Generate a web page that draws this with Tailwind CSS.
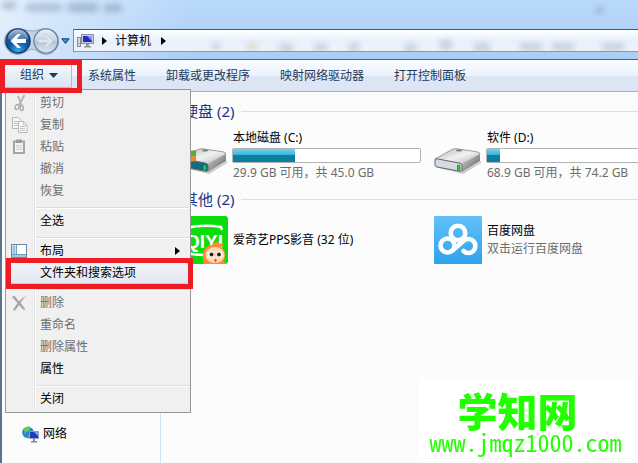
<!DOCTYPE html>
<html lang="zh-CN">
<head>
  <meta charset="UTF-8">
  <meta name="viewport" content="width=device-width, initial-scale=1">
  <title>计算机</title>
  <script src="https://cdn.jsdelivr.net/npm/@tailwindcss/browser@4"></script>
</head>
<body class="min-h-screen overflow-hidden bg-[#fcfcfc] flex flex-col font-['Noto_Sans','Noto_Sans_CJK_SC',sans-serif] text-xs text-black">

  <!-- Title bar and address bar -->
  <header class="relative h-[59px] shrink-0 overflow-hidden bg-linear-to-b from-[#b9d9fb] to-[#aacdf5] flex items-start">
    <svg class="absolute left-0 top-0 w-[638px] h-[59px]" viewBox="0 0 638 59" aria-hidden="true">
      <defs>
        <filter id="glass" x="-20%" y="-50%" width="140%" height="200%"><feGaussianBlur stdDeviation="3"/></filter>
        <linearGradient id="shine" x1="0" x2="1"><stop offset="0" stop-color="#fff" stop-opacity=".6"/><stop offset="1" stop-color="#fff" stop-opacity="0"/></linearGradient>
      </defs>
      <rect width="190" height="59" fill="url(#shine)"/>
      <g filter="url(#glass)" fill="#5f7896" opacity=".4">
        <rect x="2" y="2" width="14" height="7"/><rect x="26" y="4" width="36" height="7"/><rect x="68" y="3" width="30" height="9"/><rect x="104" y="4" width="18" height="8"/>
        <path d="M603 4v9h-10Z"/>
      </g>
    </svg>
    <nav class="relative flex items-center pl-1 pt-[27px] w-[73px] shrink-0" aria-label="导航">
      <svg class="absolute left-[3px] top-[27px]" width="57" height="29" viewBox="0 0 57 29" aria-hidden="true">
        <path d="M14.500 1.500C21 1.500 23 4 29 4S37 1.500 43 1.500C50 1.500 55.500 7 55.500 14S50 27.500 43 27.500C37 27.500 33 22 29 22S21 27.500 14.500 27.500C7 27.500 1.500 21 1.500 14S7 1.500 14.500 1.500Z" fill="#c2d2e4" stroke="#8fa5be"/>
      </svg>
      <button class="relative w-7 h-7" aria-label="后退">
        <svg width="28" height="28" viewBox="0 0 28 28">
          <defs><radialGradient id="back" cx=".5" cy=".9" r=".9"><stop offset="0" stop-color="#2fb0e8"/><stop offset=".45" stop-color="#0c5aa6"/><stop offset=".7" stop-color="#1d4c90"/><stop offset="1" stop-color="#8fb4dc"/></radialGradient></defs>
          <circle cx="14" cy="14" r="12" fill="url(#back)" stroke="#173a68" stroke-width="1.500"/>
          <path d="M4 12a10 10 0 0 1 20 0Q14 15 4 12Z" fill="#fff" opacity=".3"/>
          <path d="M13.500 7 6.500 14l7 7H17L12.500 16H22v-4h-9.500L17 7Z" fill="#fff"/>
        </svg>
      </button>
      <button class="relative w-7 h-7" aria-label="前进">
        <svg width="28" height="28" viewBox="0 0 28 28">
          <defs><linearGradient id="fwd" x2="0" y2="1"><stop offset="0" stop-color="#e9f0f8"/><stop offset=".5" stop-color="#c3d2e2"/><stop offset=".52" stop-color="#afc2d8"/><stop offset="1" stop-color="#dce9f5"/></linearGradient></defs>
          <circle cx="14" cy="14" r="12" fill="url(#fwd)" stroke="#6d7f97" stroke-width="1.200"/>
          <path d="M14.500 7.500 21 14l-6.500 6.500H11l4.500-4.700H6v-3.600h9.500L11 7.500Z" fill="#dde6ef" stroke="#b5c4d4" stroke-width=".5"/>
        </svg>
      </button>
      <button class="ml-px w-[9px]" aria-label="最近浏览的位置">
        <svg width="9" height="7" viewBox="0 0 9 7"><path d="M.8.8h7.400L4.500 5.500Z" fill="#3d97c8" stroke="#123c70"/></svg>
      </button>
    </nav>
    <div class="relative mt-[29px] h-[23px] grow flex items-center gap-2 pl-[3px] border-l border-y border-l-[#7e8c9c] border-t-[#46586c] border-b-[#8799ae] bg-linear-to-b from-white via-[#e9f1fc] to-[#eef3fa]">
      <svg class="absolute left-0 top-0 w-[565px] h-[21px]" viewBox="0 0 565 21" aria-hidden="true">
        <g filter="url(#glass)" fill="#6d7784" opacity=".28">
          <rect x="138" y="13" width="8" height="7"/><rect x="173" y="13" width="10" height="8" fill="#c08a4a"/><rect x="205" y="14" width="14" height="8"/><rect x="240" y="14" width="14" height="7"/><rect x="275" y="13" width="10" height="9"/><rect x="330" y="14" width="13" height="8"/><rect x="366" y="10" width="12" height="10"/><rect x="400" y="13" width="16" height="9"/><rect x="446" y="13" width="22" height="8"/><rect x="478" y="13" width="22" height="8"/><rect x="528" y="13" width="22" height="8"/>
        </g>
      </svg>
      <svg class="relative" width="17" height="16" viewBox="0 0 17 16" aria-hidden="true">
        <rect x=".5" y="4.500" width="3" height="9" fill="#d5d9de" stroke="#868d96"/><path d="M1.500 10.500h1" stroke="#3bd23b"/>
        <rect x="4.500" y="1.500" width="12" height="9" fill="#c9ced6" stroke="#8c939d"/><rect x="6" y="3" width="9" height="6" fill="#1c2fc4"/><path d="M10 3h5v5Z" fill="#7f9cf0"/>
        <path d="M9 11h3v2h2v1.500H7V13h2Z" fill="#9299a4"/>
      </svg>
      <svg class="relative" width="5" height="8" viewBox="0 0 5 8" aria-hidden="true"><path d="M0 0v8l5-4Z"/></svg>
      <a href="#" class="relative leading-5">计算机</a>
      <svg class="relative ml-0.5" width="5" height="8" viewBox="0 0 5 8" aria-hidden="true"><path d="M0 0v8l5-4Z"/></svg>
    </div>
  </header>

  <!-- Command bar -->
  <div class="h-[33px] shrink-0 flex items-center gap-[30px] pl-[5px] border-t border-b border-t-[#50637d] border-b-[#a3b1c5] bg-linear-to-b from-[#fafdff] from-0% via-[#eaf2fb] via-50% to-[#dce6f4] to-52% text-[#1e395b] whitespace-nowrap">
    <div class="relative h-6 w-[67px] -mr-[14px]">
      <button class="w-full h-6 pl-[15px] flex items-center gap-[5px] border-r border-b border-[#a9bdd6] bg-linear-to-b from-[#f5f9fd] to-[#d9e3f1]" aria-expanded="true">
        组织
        <svg width="9" height="5" viewBox="0 0 9 5" aria-hidden="true"><path d="M0 0h9L4.500 5Z" fill="#1e395b"/></svg>
      </button>

      <!-- Organize menu -->
      <div class="absolute z-10 left-0 top-[25px] w-[186px] py-0.5 px-px border border-[#979797] bg-[#f0f0f0] text-black" role="menu">
        <div class="absolute left-7 inset-y-0.5 w-0.5 border-l border-l-[#e2e3e3] bg-white"></div>
        <button class="relative flex items-center w-full h-[22px] text-[#6d6d6d]" role="menuitem" disabled>
          <svg class="ml-1 mr-[11px] size-[18px]" viewBox="0 0 18 18" aria-hidden="true"><path d="M7 2l3.500 9M13.500 1 8 11" stroke="#b4b4b4" stroke-width="1.800" fill="none"/><ellipse cx="6" cy="13" rx="1.800" ry="2.600" fill="none" stroke="#a9a9a9" stroke-width="1.400" transform="rotate(35 6 13)"/><ellipse cx="10.800" cy="14" rx="1.500" ry="2.600" fill="none" stroke="#a9a9a9" stroke-width="1.400"/></svg>剪切
        </button>
        <button class="relative flex items-center w-full h-[22px] text-[#6d6d6d]" role="menuitem" disabled>
          <svg class="ml-1 mr-[11px] size-[18px]" viewBox="0 0 18 18" aria-hidden="true"><g fill="#f7f7f7" stroke="#b9b9b9"><path d="M1.500 1.500h6l3 3v8h-9Z"/><path d="M7.500 5.500h5l3.500 3.500v7.500H7.500Z"/></g><path d="M3 5.500h4M3 7.500h4M3 9.500h4M9 10.500h5M9 12.500h5M9 14.500h5M12.500 5.500V9H16" stroke="#c3c3c3" fill="none"/></svg>复制
        </button>
        <button class="relative flex items-center w-full h-[22px] text-[#6d6d6d]" role="menuitem" disabled>
          <svg class="ml-1 mr-[11px] size-[18px]" viewBox="0 0 18 18" aria-hidden="true"><rect x="3" y="3.500" width="10" height="11.500" fill="#f4f4f4" stroke="#a5a5a5" stroke-width="2"/><rect x="5" y="1.500" width="6" height="3.500" fill="#9b9b9b"/><path d="M5 7.500h6M5 9.500h6M5 11.500h6" stroke="#cfcfcf"/></svg>粘贴
        </button>
        <button class="relative flex items-center w-full h-[22px] pl-[33px] text-[#6d6d6d]" role="menuitem" disabled>撤消</button>
        <button class="relative flex items-center w-full h-[22px] pl-[33px] text-[#6d6d6d]" role="menuitem" disabled>恢复</button>
        <div class="relative h-2 pt-[5px] pl-[29px]" role="separator"><div class="h-0.5 border-t border-[#dcdcdc] bg-white"></div></div>
        <button class="relative flex items-center w-full h-[22px] pl-[33px]" role="menuitem">全选</button>
        <div class="relative h-2 pt-[5px] pl-[29px]" role="separator"><div class="h-0.5 border-t border-[#dcdcdc] bg-white"></div></div>
        <button class="relative flex items-center w-full h-[22px]" role="menuitem" aria-haspopup="true">
          <svg class="ml-1 mr-[11px] size-[18px]" viewBox="0 0 18 18" aria-hidden="true"><rect x=".5" y="2.500" width="15" height="13" fill="#fff" stroke="#6886a0"/><path d="M1.500 3.500h3v9h-3Z" fill="#8cc4e4"/><path d="M5.500 3v9.500M1 12.500h14" stroke="#6f9fc0"/><path d="M1 13h14v2H1Z" fill="#9bcbe8"/></svg>布局
          <svg class="ml-auto mr-[9px]" width="5" height="8" viewBox="0 0 5 8" aria-hidden="true"><path d="M0 0v8l5-4Z"/></svg>
        </button>
        <button class="relative flex items-center w-full h-[22px] pl-8 rounded-sm border border-[#aecff7] bg-linear-to-b from-[#f1f4f9] to-[#e2e8f2]" role="menuitem">
          文件夹和搜索选项
          <span class="absolute -left-[2px] -right-[5px] -top-[5px] -bottom-[6px] border-5 border-[#ee1c25]"></span>
        </button>
        <div class="relative h-2 pt-[5px] pl-[29px]" role="separator"><div class="h-0.5 border-t border-[#dcdcdc] bg-white"></div></div>
        <button class="relative flex items-center w-full h-[22px] text-[#6d6d6d]" role="menuitem" disabled>
          <svg class="ml-1 mr-[11px] size-[18px]" viewBox="0 0 18 18" aria-hidden="true"><path d="M1 3c1-1.500 3-1 4 .5l3 4C10 5 12.500 3 15.500 2 13 4 11 6.500 9.500 9l4.500 5.500c.5 1.500-1.500 1.500-2.500.5L8 11l-3.500 5c-1 1-3 .5-2-1L6.500 9Z" fill="#a6a6a6"/></svg>删除
        </button>
        <button class="relative flex items-center w-full h-[22px] pl-[33px] text-[#6d6d6d]" role="menuitem" disabled>重命名</button>
        <button class="relative flex items-center w-full h-[22px] pl-[33px] text-[#6d6d6d]" role="menuitem" disabled>删除属性</button>
        <button class="relative flex items-center w-full h-[22px] pl-[33px]" role="menuitem">属性</button>
        <div class="relative h-2 pt-[5px] pl-[29px]" role="separator"><div class="h-0.5 border-t border-[#dcdcdc] bg-white"></div></div>
        <button class="relative flex items-center w-full h-[22px] pl-[33px]" role="menuitem">关闭</button>
      </div>

      <span class="absolute z-20 -left-[5px] -right-[10px] -top-1 -bottom-[5px] border-5 border-[#ee1c25]"></span>
    </div>
    <button>系统属性</button>
    <button>卸载或更改程序</button>
    <button>映射网络驱动器</button>
    <button>打开控制面板</button>
  </div>

  <div class="grow flex border-l-2 border-[#5b7390]">
    <!-- Navigation pane -->
    <aside class="w-[159px] shrink-0 flex flex-col justify-end pb-[18px] border-r border-[#cfe1f5]">
      <a href="#" class="flex items-center gap-1 h-[22px] pl-5">
        <svg width="17" height="17" viewBox="0 0 17 17" aria-hidden="true"><circle cx="6" cy="6.500" r="5.800" fill="#2c7fd0"/><path d="M2 3c2-3 6-3 7-1.500L7 5 4 6 3 9Z" fill="#5fd04e"/><path d="M5 8l3 1-1 3-2-1Z" fill="#39b03c"/><path d="M7.500 5.500h9v7h-9Z" fill="#2038c8" stroke="#8fa0c8"/><path d="M12 6h4v4Z" fill="#7da0f2"/><path d="M11 13h2v2h2v1.500H9V15h2Z" fill="#7c88a0"/></svg>
        网络
      </a>
    </aside>

    <main class="grow min-w-0 overflow-hidden pl-[19px] pt-2">
      <section>
        <h2 class="flex items-center gap-[7px] pl-[3px] h-[22px] text-[15px] text-[#1e3287] whitespace-nowrap">硬盘 (2)<span class="grow h-px bg-[#dfdfdf]"></span></h2>
        <div class="flex pt-1.5">
          <a href="#" class="flex items-center gap-1 w-[254px] shrink-0 h-[54px]">
            <svg class="shrink-0" width="48" height="48" viewBox="0 0 48 48" aria-hidden="true">
              <defs>
                <linearGradient id="top" x2="1" y2="1"><stop offset="0" stop-color="#b5b5b5"/><stop offset=".5" stop-color="#f1f1f1"/><stop offset="1" stop-color="#aaa"/></linearGradient>
                <linearGradient id="side" x2="1" y2="1"><stop offset="0" stop-color="#ddd"/><stop offset="1" stop-color="#555"/></linearGradient>
              </defs>
              <path d="M4 35l24 6 19-11v2L29 43 4 37Z" fill="#999" opacity=".5"/>
              <path d="M1 28 18 18.500q2-1 5-.7l20 3q3 .7 3 2.500L28 34Z" fill="url(#top)" stroke="#8a8a8a" stroke-width=".8"/>
              <ellipse cx="25" cy="19.500" rx="3" ry="1" fill="#777"/>
              <path d="M27 33 46 23v7L28 41Z" fill="url(#side)"/>
              <path d="M1 29q0-1.500 2-1.200l22 4.200q3 .7 3 2.500v4.500q0 1.800-2 1.300L3 36q-2-.5-2-2Z" fill="#146a80" stroke="#666"/>
              <path d="M23.500 34l2.500.5v5l-2.500-.5Z" fill="#1fd11f"/>
              <path d="M9 20l7-1v6l-7 1Z" fill="#63a534"/><path d="M9 26l7-1v5l-7 1Z" fill="#ef8a2b"/>
            </svg>
            <div class="w-[189px]">
              <div class="pl-px leading-4">本地磁盘 (C:)</div>
              <div class="my-0.5 h-[15px] border border-[#b2b2b2] rounded-xs bg-white">
                <div class="h-[13px] bg-linear-to-b from-[#6fd3ee] from-0% via-[#35b3d6] via-45% to-[#0b7f9f] to-50%" style="width: 33%"></div>
              </div>
              <div class="pl-px leading-4 text-[#6d6d6d] whitespace-nowrap">29.9 GB 可用，共 45.0 GB</div>
            </div>
          </a>
          <a href="#" class="flex items-center gap-1 w-[254px] shrink-0 h-[54px]">
            <svg class="shrink-0" width="48" height="48" viewBox="0 0 48 48" aria-hidden="true">
              <path d="M4 35l24 6 19-11v2L29 43 4 37Z" fill="#999" opacity=".5"/>
              <path d="M1 28 18 18.500q2-1 5-.7l20 3q3 .7 3 2.500L28 34Z" fill="url(#top)" stroke="#8a8a8a" stroke-width=".8"/>
              <ellipse cx="25" cy="19.500" rx="3" ry="1" fill="#777"/>
              <path d="M27 33 46 23v7L28 41Z" fill="url(#side)"/>
              <path d="M1 29q0-1.500 2-1.200l22 4.200q3 .7 3 2.500v4.500q0 1.800-2 1.300L3 36q-2-.5-2-2Z" fill="#d5dae3" stroke="#666"/>
              <path d="M23.500 34l2.500.5v5l-2.500-.5Z" fill="#1fd11f" stroke="#175c17" stroke-width=".5"/>
            </svg>
            <div class="w-[189px]">
              <div class="pl-px leading-4">软件 (D:)</div>
              <div class="my-0.5 h-[15px] border border-[#b2b2b2] rounded-xs bg-white">
                <div class="h-[13px] bg-linear-to-b from-[#6fd3ee] from-0% via-[#35b3d6] via-45% to-[#0b7f9f] to-50%" style="width: 7%"></div>
              </div>
              <div class="pl-px leading-4 text-[#6d6d6d] whitespace-nowrap">68.9 GB 可用，共 74.2 GB</div>
            </div>
          </a>
        </div>
      </section>

      <section class="pt-1.5">
        <h2 class="flex items-center gap-[7px] pl-[3px] h-[22px] text-[15px] text-[#1e3287] whitespace-nowrap">其他 (2)<span class="grow h-px bg-[#dfdfdf]"></span></h2>
        <div class="flex pt-1.5">
          <a href="#" class="flex items-center gap-[5px] w-[254px] shrink-0 h-12">
            <svg class="shrink-0" width="48" height="48" viewBox="0 0 48 48" aria-hidden="true">
              <rect width="48" height="48" rx="3" fill="#0bdc0b"/>
              <path d="M6 12q18-4 35-1l1 3M6 37q9 2 18 2" fill="none" stroke="#fff" stroke-width="2.500"/>
              <text x="5" y="32" fill="#fff" font-family="Liberation Sans" font-size="19" font-weight="700">QIYI</text>
              <path d="M23 42q-1-12 9-13 4-4 7-4l-1 3 6-1-3 4q6 5 3 14l2 3H24Z" fill="#ff8a33"/>
              <ellipse cx="35" cy="39" rx="9.500" ry="8" fill="#ffd9b8"/>
              <circle cx="31" cy="38.500" r="3" fill="#fff"/><circle cx="39.500" cy="38.500" r="3" fill="#fff"/><circle cx="31.500" cy="38.500" r="2" fill="#222"/><circle cx="39" cy="38.500" r="2" fill="#222"/>
              <ellipse cx="35.500" cy="44.500" rx="1.200" ry="1.800" fill="#e2533a"/>
            </svg>
            <div>爱奇艺PPS影音 (32 位)</div>
          </a>
          <a href="#" class="flex items-center gap-[5px] w-[254px] shrink-0 h-12">
            <svg class="shrink-0" width="48" height="48" viewBox="0 0 48 48" aria-hidden="true">
              <defs><linearGradient id="pan" x2="0" y2="1"><stop offset="0" stop-color="#62c1f9"/><stop offset="1" stop-color="#2ea2ee"/></linearGradient></defs>
              <rect width="48" height="48" rx="1" fill="url(#pan)"/>
              <g fill="none" stroke="#fff" stroke-width="4.600">
                <circle cx="24" cy="17" r="7.300"/><circle cx="13.500" cy="29.500" r="7"/>
                <path d="M18.500 34.500 30 24.500A7 7 0 1 1 29.500 35" stroke-linecap="round"/>
              </g>
            </svg>
            <div class="leading-[18px]">
              <div>百度网盘</div>
              <div class="text-[#6d6d6d]">双击运行百度网盘</div>
            </div>
          </a>
        </div>
      </section>
    </main>
  </div>

  <!-- Site watermark -->
  <div class="fixed right-[5px] bottom-[5px] w-[215px] h-20 bg-white text-[#22ff00] text-center font-['Noto_Sans_CJK_SC',sans-serif]">
    <div class="pt-3 text-[40px] leading-10 font-black pr-4">学知网</div>
    <div class="text-2xl leading-6 [font-feature-settings:'hwid']">www.jmqz1000.com</div>
  </div>

</body>
</html>
